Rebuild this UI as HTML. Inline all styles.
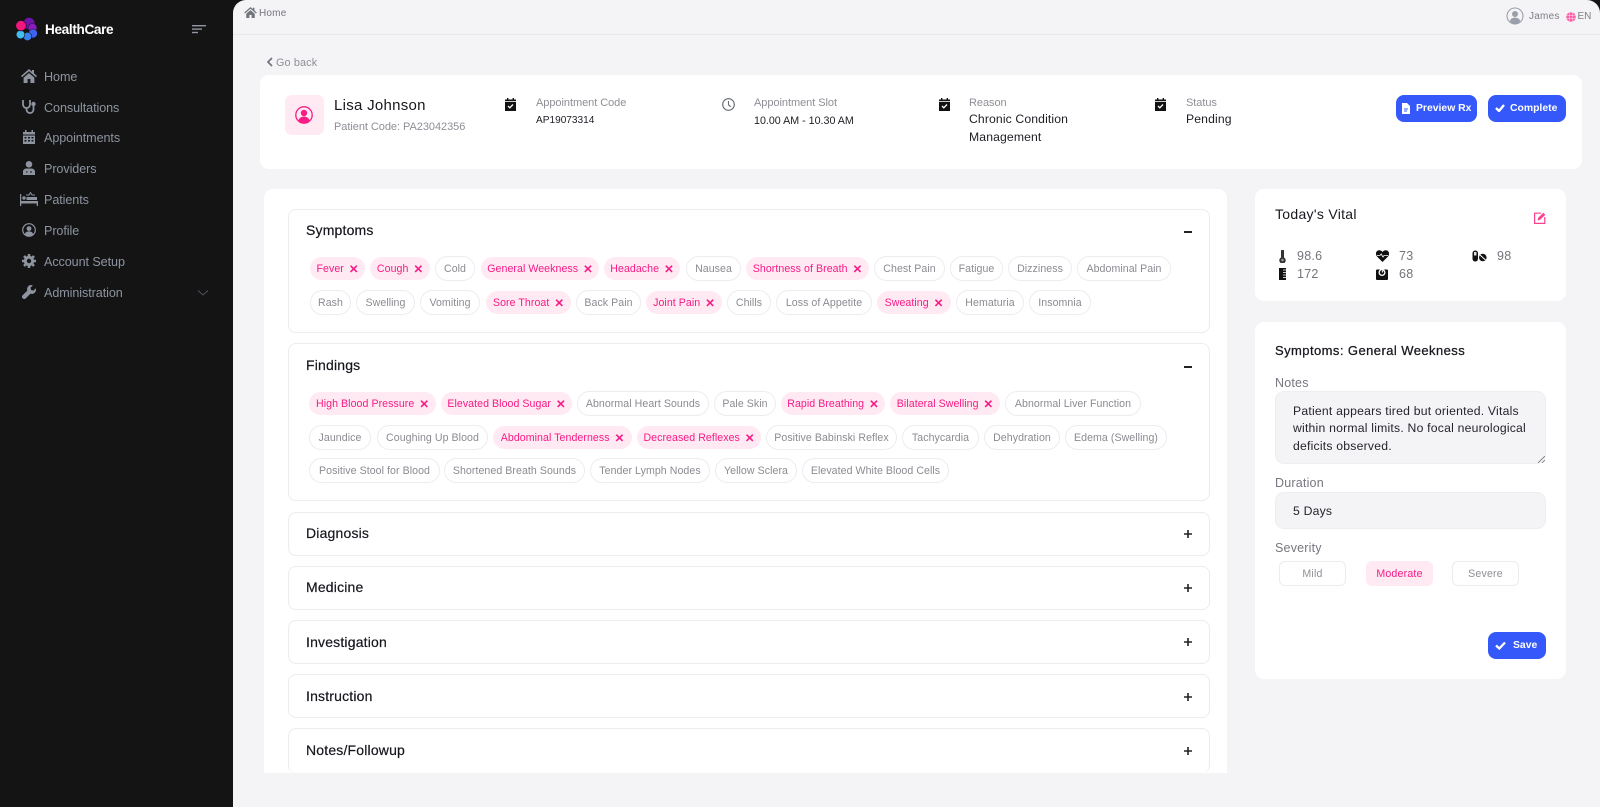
<!DOCTYPE html>
<html><head><meta charset="utf-8"><title>HealthCare</title>
<style>
*{box-sizing:border-box}
html,body{margin:0;padding:0;width:1600px;height:807px;overflow:hidden;background:#141414;font-family:"Liberation Sans",sans-serif}
.a{position:absolute}
.t{position:absolute;white-space:nowrap;line-height:16px}
svg{position:absolute;display:block}
#main{left:233px;top:0;width:1367px;height:807px;background:#f4f4f7;border-radius:13px 13px 0 0}
.nav{color:#8d94a0;font-size:12.6px;left:44px;letter-spacing:-.08px}
.box{position:absolute;background:#fff;border-radius:9px}
.acc{position:absolute;left:288px;width:922px;border:1px solid #ececf0;border-radius:8px;background:#fff}
.ah{left:306px;font-size:14px;color:#15151d;letter-spacing:.18px;-webkit-text-stroke:.2px #15151d}
.lb{color:#8e8e96;font-size:11px;letter-spacing:-.05px}
.vl{color:#1d1d24;font-size:11.5px;letter-spacing:.13px}
.c{position:absolute;height:25px;line-height:24px;border:1px solid #ededf1;border-radius:13px;background:#fff;color:#8b8b92;font-size:10.6px;letter-spacing:.06px;text-align:center;white-space:nowrap}
.c.on{height:23px;margin-top:1px;line-height:24px;border:0;background:#ffe9f3;color:#f71c85}
.c.on b{font-size:11.500px;margin-left:5px;font-weight:bold;vertical-align:-.5px;letter-spacing:0}
.btn{position:absolute;background:#3558fb;border-radius:8px;color:#fff;font-size:10.4px;font-weight:bold;height:27px;line-height:28px;white-space:nowrap}
.f{position:absolute;left:1275px;width:271px;background:#f4f4f7;border:1px solid #eeeef2;border-radius:9px}
.fl{left:1275px;color:#77777f;font-size:12.5px;letter-spacing:.2px}
.ft{left:1293px;color:#24242b;font-size:12.2px;letter-spacing:.22px}
.s{position:absolute;top:561px;width:67px;height:25px;border:1px solid #ececf0;border-radius:6px;background:#fff;color:#8f8f96;font-size:10.6px;line-height:24px;text-align:center;letter-spacing:.2px}
.vv{color:#74747c;font-size:12.5px;letter-spacing:.25px}
</style></head><body>

<!-- sidebar -->
<svg style="left:14px;top:16px" width="26" height="26" viewBox="0 0 26 26" stroke="#141414" stroke-width=".6">
<circle cx="15" cy="7.500" r="6" fill="#6f14ad"/><circle cx="18.500" cy="12" r="4.500" fill="#8a1cc2"/>
<circle cx="19" cy="17.500" r="4.500" fill="#3f62f2"/><circle cx="13.500" cy="20.500" r="4.200" fill="#3c80f0"/>
<circle cx="6.500" cy="18.500" r="4.300" fill="#41bdf0"/>
<circle cx="7" cy="9.700" r="5.200" fill="#f4167f"/>
</svg>
<div class="t" style="left:45px;top:22px;color:#fff;font-size:13.6px;font-weight:bold;letter-spacing:-.35px">HealthCare</div>
<svg style="left:192px;top:25px" width="14" height="9" viewBox="0 0 14 9" fill="#9096a2"><rect width="14" height="1.400" y="0"/><rect width="10" height="1.400" y="3.400"/><rect width="6" height="1.400" y="6.800"/></svg>

<svg style="left:21px;top:69px" width="16" height="14" viewBox="0 0 16 14" fill="#8d94a0"><path d="M8 0 0 7l1 1.200L8 2.200l7 6L16 7l-3-2.600V1h-2v1.700zM2.600 8.600V14h4V10h2.800v4h4V8.600L8 4z"/></svg>
<div class="t nav" style="top:69px">Home</div>
<svg style="left:22px;top:99px" width="14" height="15" viewBox="0 0 14 15" fill="none" stroke="#8d94a0" stroke-width="1.800"><path d="M1 1v4.500a3.500 3.500 0 0 0 7 0V1"/><path d="M4.500 9v1.500a3.500 3.500 0 0 0 7 0V7"/><circle cx="11.500" cy="5" r="1.300" fill="#8d94a0"/></svg>
<div class="t nav" style="top:99.500px">Consultations</div>
<svg style="left:23px;top:130px" width="12" height="14" viewBox="0 0 12 14" fill="#8d94a0"><path d="M2 0h1.500v2h5V0H10v2h2v2.500H0V2h2zM0 5.500h12V14H0zM1.500 7v1.500h2V7zm3.500 0v1.500h2V7zm3.500 0v1.500h2V7zM1.500 10v1.500h2V10zm3.500 0v1.500h2V10zm3.500 0v1.500h2V10z"/></svg>
<div class="t nav" style="top:130px">Appointments</div>
<svg style="left:23px;top:161px" width="12" height="14" viewBox="0 0 12 14" fill="#8d94a0"><circle cx="6" cy="3.300" r="3.300"/><path d="M0 14v-3.500C0 8.500 2 7.500 3.500 7.500h5c1.500 0 3.500 1 3.500 3.500V14z"/><path d="M3 11h1.500M7 11h2" stroke="#141414" stroke-width="1"/></svg>
<div class="t nav" style="top:161px">Providers</div>
<svg style="left:20px;top:192px" width="18" height="14" viewBox="0 0 18 14" fill="#8d94a0"><path d="M0 2h1.200v7H18v5h-1.300v-2.500H1.200V14H0z"/><circle cx="4" cy="6" r="1.700"/><path d="M6.500 5H17v3H6.500z"/><path d="M6 3h3l1.500-2.500L12 3h3" fill="none" stroke="#8d94a0"/></svg>
<div class="t nav" style="top:192px">Patients</div>
<svg style="left:22px;top:223px" width="14" height="14" viewBox="0 0 14 14"><circle cx="7" cy="7" r="6.300" fill="none" stroke="#8d94a0" stroke-width="1.200"/><circle cx="7" cy="5.600" r="2.400" fill="#8d94a0"/><path d="M2.800 11.200c.6-2 2.200-2.800 4.200-2.800s3.600.8 4.200 2.800C10 12.500 8.500 13 7 13s-3-.5-4.200-1.800z" fill="#8d94a0"/></svg>
<div class="t nav" style="top:223px">Profile</div>
<svg style="left:22px;top:254px" width="14" height="14" viewBox="0 0 14 14"><circle cx="7" cy="7" r="3.700" fill="none" stroke="#8d94a0" stroke-width="3"/><path d="M7 0v3M7 11v3M0 7h3M11 7h3M2 2l2.200 2.200M9.800 9.800 12 12M12 2 9.800 4.200M4.200 9.800 2 12" stroke="#8d94a0" stroke-width="2.500"/></svg>
<div class="t nav" style="top:254px">Account Setup</div>
<svg style="left:22px;top:285px" width="14" height="14" viewBox="0 0 14 14" fill="#8d94a0"><path d="M13.800 3.200 11.400 5.600l-2.300-.6-.6-2.300L10.900.3C9.300-.3 7.500 0 6.300 1.200 5.100 2.400 4.800 4.100 5.300 5.600L.5 10.400a1.800 1.800 0 0 0 0 2.600l.5.500a1.800 1.800 0 0 0 2.600 0l4.800-4.800c1.500.5 3.200.2 4.400-1C13.900 6.500 14.300 4.800 13.800 3.200z"/></svg>
<div class="t nav" style="top:284.500px">Administration</div>
<svg style="left:197px;top:289px" width="12" height="8" viewBox="0 0 12 8" fill="none" stroke="#4e525a"><path d="M1 1.500 6 6l5-4.500"/></svg>

<!-- main -->
<div class="a" id="main"></div>
<div class="a" style="left:233px;top:34px;width:1367px;height:1px;background:#e8e8ec"></div>
<svg style="left:244px;top:7px" width="13" height="11" viewBox="0 0 16 14" fill="#70747c"><path d="M8 0 0 7l1 1.200L8 2.200l7 6L16 7l-3-2.600V1h-2v1.700zM2.600 8.600V14h4V10h2.800v4h4V8.600L8 4z"/></svg>
<div class="t" style="left:259px;top:6px;font-size:10px;color:#74747c;letter-spacing:.2px">Home</div>
<svg style="left:1506px;top:7px" width="18" height="18" viewBox="0 0 18 18"><circle cx="9" cy="9" r="8" fill="none" stroke="#9aa0ab" stroke-width="1.100"/><circle cx="9" cy="7" r="3" fill="#9aa0ab"/><path d="M3.800 14c.8-2.400 2.800-3.400 5.200-3.400s4.400 1 5.200 3.400C13 16 11 16.600 9 16.600S5 16 3.800 14z" fill="#9aa0ab"/></svg>
<div class="t" style="left:1529px;top:9px;font-size:10px;color:#7d7d85;letter-spacing:.25px">James</div>
<svg style="left:1566px;top:12px" width="10" height="10" viewBox="0 0 10 10"><circle cx="5" cy="5" r="4.800" fill="#ff5ca6"/><path d="M0 3.400h10M0 6.600h10M3.400 0v10M6.600 0v10" stroke="#ffd0e4" stroke-width=".6"/></svg>
<div class="t" style="left:1577.500px;top:9px;font-size:10px;color:#7d7d85">EN</div>

<svg style="left:267px;top:57px" width="6" height="10" viewBox="0 0 6 10" fill="none" stroke="#70747c" stroke-width="1.700"><path d="M5 1 1 5l4 4"/></svg>
<div class="t" style="left:276px;top:54.500px;font-size:10.800px;color:#8e8e96;letter-spacing:.15px">Go back</div>

<!-- patient card -->
<div class="box" style="left:260px;top:75px;width:1322px;height:94px"></div>
<div class="a" style="left:285px;top:95px;width:39px;height:40px;background:#ffe9f3;border-radius:7px"></div>
<svg style="left:295px;top:106px" width="18" height="18" viewBox="0 0 18 18"><circle cx="9" cy="9" r="8.200" fill="none" stroke="#f71c85" stroke-width="1.300"/><circle cx="9" cy="7" r="3.200" fill="#f71c85"/><path d="M3.500 14.200c.8-2.600 3-3.600 5.500-3.600s4.700 1 5.500 3.600C13 16.200 11 17 9 17s-4-.8-5.500-2.800z" fill="#f71c85"/></svg>
<div class="t" style="left:334px;top:97px;font-size:15px;color:#17171e;letter-spacing:.28px;line-height:18px">Lisa Johnson</div>
<div class="t lb" style="left:334px;top:119px">Patient Code: PA23042356</div>
<svg style="left:505px;top:98px" width="11" height="13" viewBox="0 0 11 13"><path d="M2 0h1.400v1.500h4.200V0H9v1.500h2V13H0V1.500h2z" fill="#111"/><path d="M0 3.600h11" stroke="#fff" stroke-width=".8"/><path d="M3 8l1.800 1.800L8 6.500" stroke="#fff" stroke-width="1.300" fill="none"/></svg>
<div class="t lb" style="left:536px;top:95px">Appointment Code</div>
<div class="t vl" style="left:536px;top:112.500px;font-size:10.100px;letter-spacing:0">AP19073314</div>
<svg style="left:722px;top:98px" width="13" height="13" viewBox="0 0 13 13" fill="none" stroke="#666a72" stroke-width="1.100"><circle cx="6.500" cy="6.500" r="5.800"/><path d="M6.500 3v3.800l2.200 2"/></svg>
<div class="t lb" style="left:754px;top:95px">Appointment Slot</div>
<div class="t vl" style="left:754px;top:112.500px;font-size:10.700px;letter-spacing:0">10.00 AM - 10.30 AM</div>
<svg style="left:939px;top:98px" width="11" height="13" viewBox="0 0 11 13"><path d="M2 0h1.400v1.500h4.200V0H9v1.500h2V13H0V1.500h2z" fill="#111"/><path d="M0 3.600h11" stroke="#fff" stroke-width=".8"/><path d="M3 8l1.800 1.800L8 6.500" stroke="#fff" stroke-width="1.300" fill="none"/></svg>
<div class="t lb" style="left:969px;top:95px">Reason</div>
<div class="t vl" style="left:969px;top:111px;font-size:12.200px">Chronic Condition</div>
<div class="t vl" style="left:969px;top:129px;font-size:12.200px">Management</div>
<svg style="left:1155px;top:98px" width="11" height="13" viewBox="0 0 11 13"><path d="M2 0h1.400v1.500h4.200V0H9v1.500h2V13H0V1.500h2z" fill="#111"/><path d="M0 3.600h11" stroke="#fff" stroke-width=".8"/><path d="M3 8l1.800 1.800L8 6.500" stroke="#fff" stroke-width="1.300" fill="none"/></svg>
<div class="t lb" style="left:1186px;top:95px">Status</div>
<div class="t vl" style="left:1186px;top:111px;font-size:12.200px">Pending</div>
<div class="btn" style="left:1396px;top:95px;width:81px;padding-left:20px">Preview Rx</div>
<svg style="left:1402px;top:103px" width="8" height="11" viewBox="0 0 8 11"><path d="M0 0h5l3 3v8H0z" fill="#fff"/><path d="M2 6h4M2 8h3" stroke="#3558fb"/></svg>
<div class="btn" style="left:1488px;top:95px;width:78px;padding-left:22px">Complete</div>
<svg style="left:1495px;top:104px" width="10" height="8" viewBox="0 0 10 8" fill="none" stroke="#fff" stroke-width="2.300"><path d="M1 4l3 3 5-6"/></svg>

<!-- left panel -->
<div class="a" style="left:264px;top:189px;width:963px;height:584px;background:#fff;border-radius:9px 9px 0 0"></div>

<div class="acc" style="top:209px;height:124px"></div>
<div class="t ah" style="top:222px">Symptoms</div>
<div class="a" style="left:1184px;top:231px;width:8px;height:1.600px;background:#222"></div>

<div class="c on" style="left:310px;top:256px;width:55px">Fever<b>✕</b></div>
<div class="c on" style="left:370px;top:256px;width:60px">Cough<b>✕</b></div>
<div class="c" style="left:435px;top:256px;width:40px">Cold</div>
<div class="c on" style="left:481px;top:256px;width:118px">General Weekness<b>✕</b></div>
<div class="c on" style="left:604px;top:256px;width:76px">Headache<b>✕</b></div>
<div class="c" style="left:686px;top:256px;width:55px">Nausea</div>
<div class="c on" style="left:746px;top:256px;width:123px">Shortness of Breath<b>✕</b></div>
<div class="c" style="left:874px;top:256px;width:71px">Chest Pain</div>
<div class="c" style="left:950px;top:256px;width:53px">Fatigue</div>
<div class="c" style="left:1008px;top:256px;width:64px">Dizziness</div>
<div class="c" style="left:1077px;top:256px;width:94px">Abdominal Pain</div>

<div class="c" style="left:310px;top:290px;width:41px">Rash</div>
<div class="c" style="left:356px;top:290px;width:59px">Swelling</div>
<div class="c" style="left:420px;top:290px;width:60px">Vomiting</div>
<div class="c on" style="left:486px;top:290px;width:85px">Sore Throat<b>✕</b></div>
<div class="c" style="left:576px;top:290px;width:65px">Back Pain</div>
<div class="c on" style="left:646px;top:290px;width:76px">Joint Pain<b>✕</b></div>
<div class="c" style="left:727px;top:290px;width:44px">Chills</div>
<div class="c" style="left:776px;top:290px;width:96px">Loss of Appetite</div>
<div class="c on" style="left:877px;top:290px;width:74px">Sweating<b>✕</b></div>
<div class="c" style="left:956px;top:290px;width:68px">Hematuria</div>
<div class="c" style="left:1029px;top:290px;width:62px">Insomnia</div>

<div class="acc" style="top:343px;height:158px"></div>
<div class="t ah" style="top:357px">Findings</div>
<div class="a" style="left:1184px;top:366px;width:8px;height:1.600px;background:#222"></div>

<div class="c on" style="left:309px;top:391px;width:127px">High Blood Pressure<b>✕</b></div>
<div class="c on" style="left:441px;top:391px;width:131px">Elevated Blood Sugar<b>✕</b></div>
<div class="c" style="left:577px;top:391px;width:132px">Abnormal Heart Sounds</div>
<div class="c" style="left:714px;top:391px;width:62px">Pale Skin</div>
<div class="c on" style="left:781px;top:391px;width:104px">Rapid Breathing<b>✕</b></div>
<div class="c on" style="left:890px;top:391px;width:110px">Bilateral Swelling<b>✕</b></div>
<div class="c" style="left:1005px;top:391px;width:136px">Abnormal Liver Function</div>

<div class="c" style="left:309px;top:425px;width:62px">Jaundice</div>
<div class="c" style="left:377px;top:425px;width:111px">Coughing Up Blood</div>
<div class="c on" style="left:493px;top:425px;width:139px">Abdominal Tenderness<b>✕</b></div>
<div class="c on" style="left:637px;top:425px;width:124px">Decreased Reflexes<b>✕</b></div>
<div class="c" style="left:766px;top:425px;width:131px">Positive Babinski Reflex</div>
<div class="c" style="left:902px;top:425px;width:77px">Tachycardia</div>
<div class="c" style="left:984px;top:425px;width:76px">Dehydration</div>
<div class="c" style="left:1065px;top:425px;width:102px">Edema (Swelling)</div>

<div class="c" style="left:309px;top:458px;width:131px">Positive Stool for Blood</div>
<div class="c" style="left:444px;top:458px;width:141px">Shortened Breath Sounds</div>
<div class="c" style="left:590px;top:458px;width:120px">Tender Lymph Nodes</div>
<div class="c" style="left:715px;top:458px;width:82px">Yellow Sclera</div>
<div class="c" style="left:802px;top:458px;width:147px">Elevated White Blood Cells</div>

<div class="acc" style="top:512px;height:44px"></div>
<div class="t ah" style="top:525px">Diagnosis</div>
<div class="acc" style="top:566px;height:44px"></div>
<div class="t ah" style="top:579px">Medicine</div>
<div class="acc" style="top:620px;height:44px"></div>
<div class="t ah" style="top:633.500px">Investigation</div>
<div class="acc" style="top:674px;height:44px"></div>
<div class="t ah" style="top:688px">Instruction</div>
<div class="acc" style="top:728px;height:45px;border-bottom:0"></div>
<div class="t ah" style="top:742px">Notes/Followup</div>
<svg style="left:1184px;top:530px" width="8" height="8" viewBox="0 0 8 8" fill="#222"><path d="M3.200 0h1.600v8H3.200zM0 3.200h8v1.600H0z"/></svg>
<svg style="left:1184px;top:584px" width="8" height="8" viewBox="0 0 8 8" fill="#222"><path d="M3.200 0h1.600v8H3.200zM0 3.200h8v1.600H0z"/></svg>
<svg style="left:1184px;top:638px" width="8" height="8" viewBox="0 0 8 8" fill="#222"><path d="M3.200 0h1.600v8H3.200zM0 3.200h8v1.600H0z"/></svg>
<svg style="left:1184px;top:693px" width="8" height="8" viewBox="0 0 8 8" fill="#222"><path d="M3.200 0h1.600v8H3.200zM0 3.200h8v1.600H0z"/></svg>
<svg style="left:1184px;top:747px" width="8" height="8" viewBox="0 0 8 8" fill="#222"><path d="M3.200 0h1.600v8H3.200zM0 3.200h8v1.600H0z"/></svg>

<!-- vitals -->
<div class="box" style="left:1255px;top:189px;width:311px;height:112px"></div>
<div class="t" style="left:1275px;top:206px;font-size:14px;color:#17171e;letter-spacing:.3px">Today's Vital</div>
<svg style="left:1534px;top:212px" width="12" height="12" viewBox="0 0 12 12" fill="none" stroke="#f8418f" stroke-width="1.200"><path d="M7 1.200H.6v10.200h10.200V5"/><path d="M3.500 8.500 4.200 5.800 9.300.7l2 2-5.100 5.100z" fill="#f8418f" stroke="none"/></svg>
<svg style="left:1279px;top:250px" width="7" height="13" viewBox="0 0 7 13"><path d="M2 1a1.500 1.500 0 0 1 3 0v6.500a3.200 3.200 0 1 1-3 0z" fill="#333"/><circle cx="3.500" cy="10" r="1.300" fill="#999"/></svg>
<div class="t vv" style="left:1297px;top:248px">98.6</div>
<svg style="left:1376px;top:250px" width="13" height="12" viewBox="0 0 13 12"><path d="M6.500 12 1 6.500C-1 4-.2.500 3 .2c1.500-.1 2.700.5 3.500 1.800C7.300.7 8.500.1 10 .2c3.200.3 4 3.800 2 6.300z" fill="#111"/><path d="M1 5.500h3l1.200-1.500 1.800 3 1-1.500h4" stroke="#fff" fill="none" stroke-width=".8"/></svg>
<div class="t vv" style="left:1399px;top:248px">73</div>
<svg style="left:1472px;top:250px" width="15" height="12" viewBox="0 0 15 12"><rect x=".5" y=".5" width="5.500" height="11" rx="2.700" fill="#111"/><rect x="2" y="2" width="2.500" height="3.500" fill="#ddd"/><circle cx="10.800" cy="7.500" r="3.800" fill="#111"/><path d="M8 5l5.500 5" stroke="#fff"/></svg>
<div class="t vv" style="left:1497px;top:248px">98</div>
<svg style="left:1279px;top:268px" width="7" height="12" viewBox="0 0 7 12"><rect width="7" height="12" fill="#111"/><path d="M4 2h3M4 4.500h3M4 7h3M4 9.500h3" stroke="#fff" stroke-width=".7"/></svg>
<div class="t vv" style="left:1297px;top:266px">172</div>
<svg style="left:1376px;top:268px" width="12" height="12" viewBox="0 0 12 12"><rect y="1.500" width="12" height="10.500" rx="1" fill="#111"/><circle cx="6" cy="4.500" r="3.500" fill="#fff"/><circle cx="6" cy="4.500" r="2.200" fill="#111"/><path d="M6 4.500 7 2.500" stroke="#fff"/></svg>
<div class="t vv" style="left:1399px;top:266px">68</div>

<!-- symptom detail -->
<div class="box" style="left:1255px;top:322px;width:311px;height:357px"></div>
<div class="t" style="left:1275px;top:343px;font-size:13px;color:#17171e;letter-spacing:.43px;-webkit-text-stroke:.25px #17171e">Symptoms: General Weekness</div>
<div class="t fl" style="top:375px">Notes</div>
<div class="f" style="top:391px;height:73px"></div>
<div class="t ft" style="top:402.500px">Patient appears tired but oriented. Vitals</div>
<div class="t ft" style="top:420px">within normal limits. No focal neurological</div>
<div class="t ft" style="top:438px">deficits observed.</div>
<svg style="left:1538px;top:456px" width="7" height="7" viewBox="0 0 7 7" stroke="#777" stroke-width=".8"><path d="M0 7 7 0M4 7l3-3"/></svg>
<div class="t fl" style="top:475px">Duration</div>
<div class="f" style="top:492px;height:37px"></div>
<div class="t ft" style="top:503px">5 Days</div>
<div class="t fl" style="top:540px">Severity</div>
<div class="s" style="left:1279px">Mild</div>
<div class="s" style="left:1366px;background:#ffe9f3;border-color:#ffe9f3;color:#f71c85">Moderate</div>
<div class="s" style="left:1452px">Severe</div>
<div class="btn" style="left:1488px;top:632px;width:58px;padding-left:25px">Save</div>
<svg style="left:1495px;top:641px" width="11" height="9" viewBox="0 0 11 9" fill="none" stroke="#fff" stroke-width="2.300"><path d="M1 4.500l3.300 3L10 1.500"/></svg>
</body></html>
